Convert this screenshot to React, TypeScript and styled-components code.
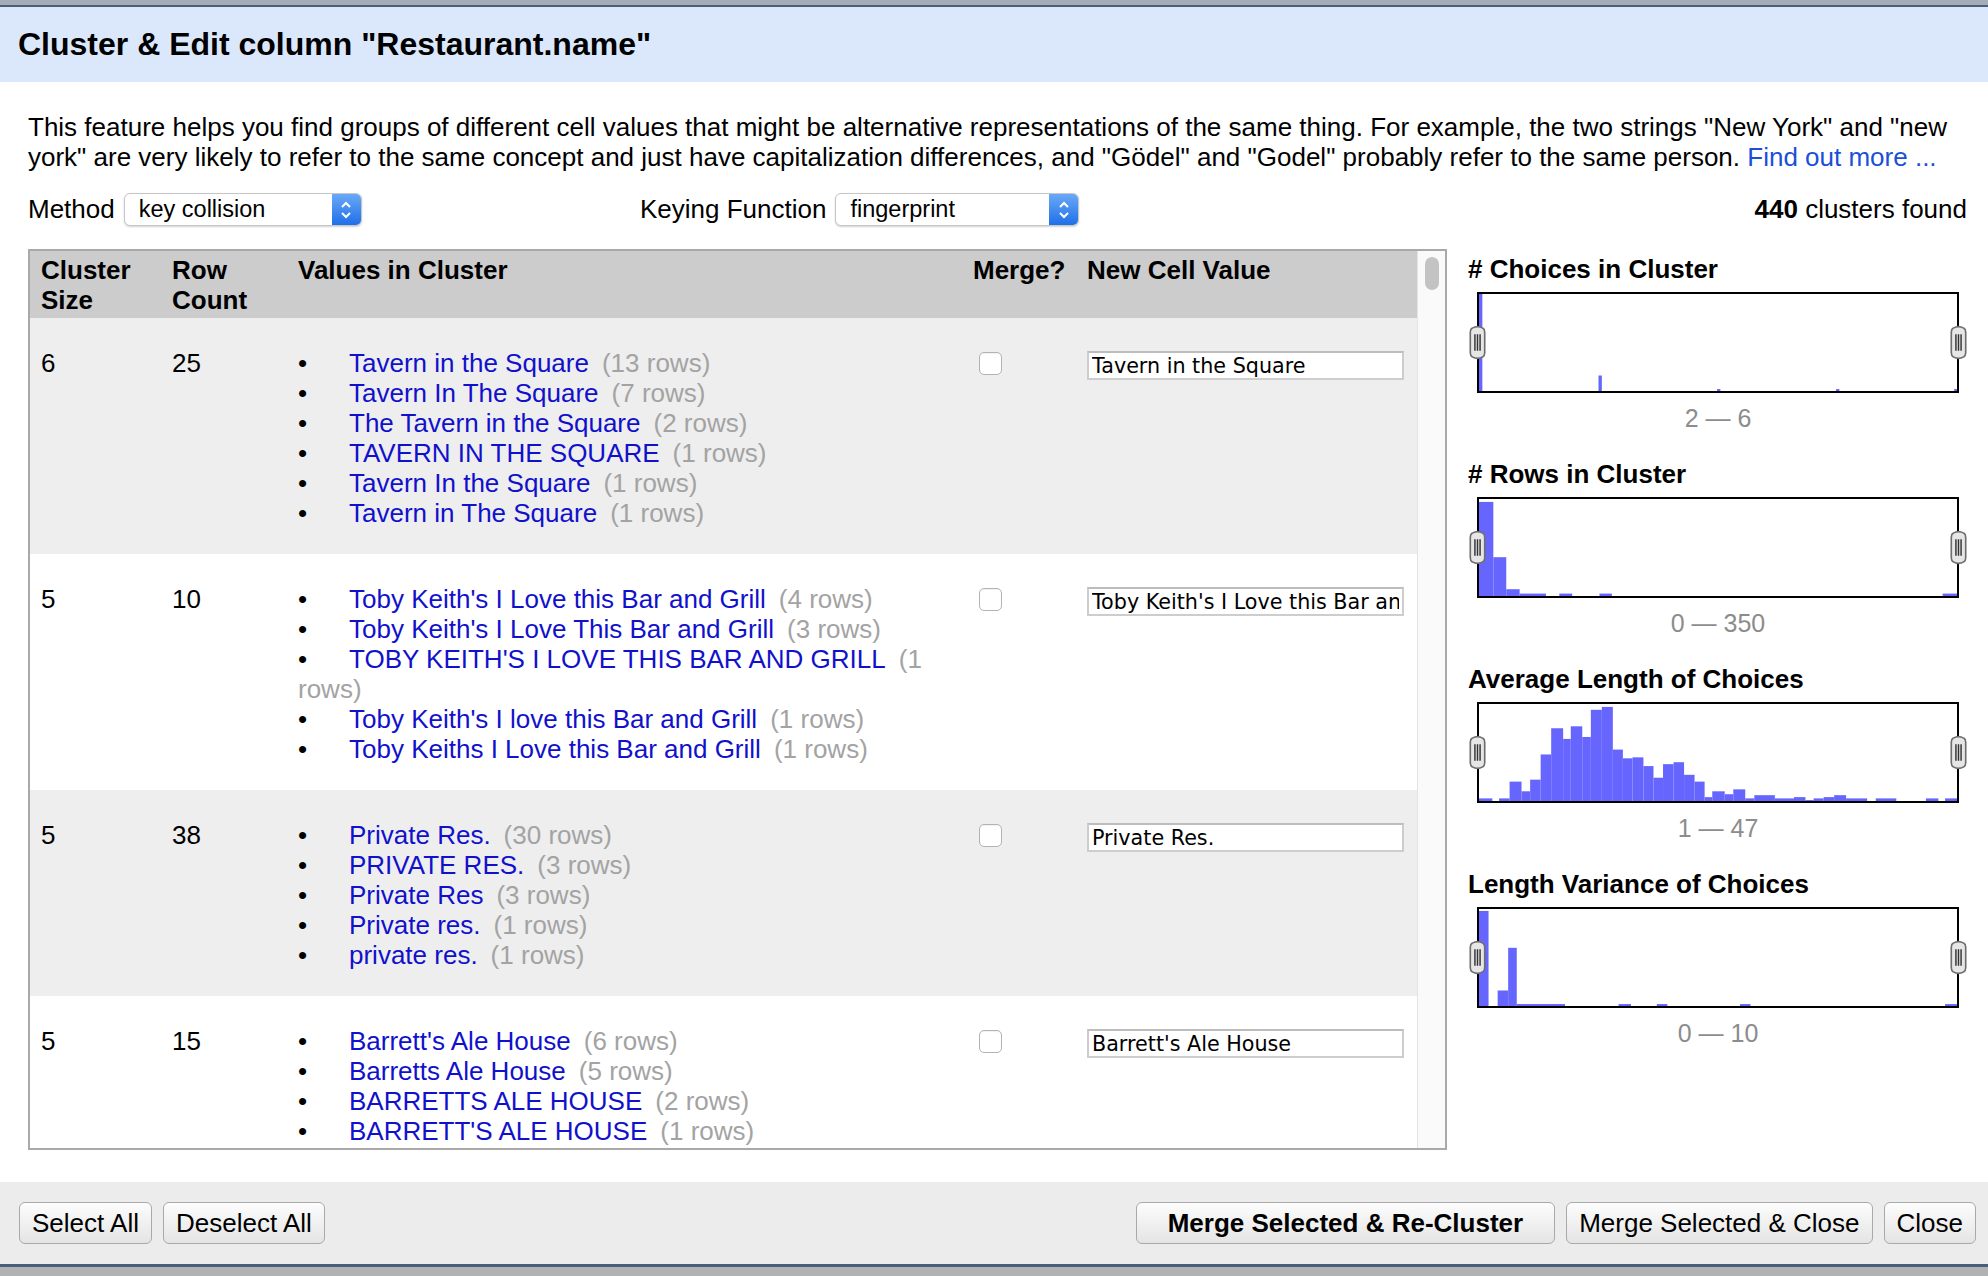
import * as React from 'react'
import styled, { createGlobalStyle } from 'styled-components'

const GlobalStyle = createGlobalStyle`
  html, body {
    margin: 0;
    padding: 0;
    background: #fff;
  }
  body {
    font-family: "Liberation Sans", Arial, Helvetica, sans-serif;
    color: #000;
    overflow: hidden;
  }
`

interface Cluster {
  size: number
  rows: number
  newValue: string
  values: [string, number][]
}

const CLUSTERS: Cluster[] = [
  {
    size: 6,
    rows: 25,
    newValue: 'Tavern in the Square',
    values: [
      ['Tavern in the Square', 13],
      ['Tavern In The Square', 7],
      ['The Tavern in the Square', 2],
      ['TAVERN IN THE SQUARE', 1],
      ['Tavern In the Square', 1],
      ['Tavern in The Square', 1],
    ],
  },
  {
    size: 5,
    rows: 10,
    newValue: "Toby Keith's I Love this Bar and Grill",
    values: [
      ["Toby Keith's I Love this Bar and Grill", 4],
      ["Toby Keith's I Love This Bar and Grill", 3],
      ["TOBY KEITH'S I LOVE THIS BAR AND GRILL", 1],
      ["Toby Keith's I love this Bar and Grill", 1],
      ['Toby Keiths I Love this Bar and Grill', 1],
    ],
  },
  {
    size: 5,
    rows: 38,
    newValue: 'Private Res.',
    values: [
      ['Private Res.', 30],
      ['PRIVATE RES.', 3],
      ['Private Res', 3],
      ['Private res.', 1],
      ['private res.', 1],
    ],
  },
  {
    size: 5,
    rows: 15,
    newValue: "Barrett's Ale House",
    values: [
      ["Barrett's Ale House", 6],
      ['Barretts Ale House', 5],
      ['BARRETTS ALE HOUSE', 2],
      ["BARRETT'S ALE HOUSE", 1],
    ],
  },
]

// bars: [start, end, height] on a 0..1000 x scale, height 0..1
type Bar = [number, number, number]

interface Facet {
  title: string
  range: string
  bars: Bar[]
}

const FACETS: Facet[] = [
  {
    title: '# Choices in Cluster',
    range: '2 — 6',
    bars: [
      [0, 7, 1],
      [250, 257, 0.16],
      [498, 505, 0.02],
      [747, 754, 0.02],
      [994, 1000, 0.02],
    ],
  },
  {
    title: '# Rows in Cluster',
    range: '0 — 350',
    bars: [
      [0, 30, 0.97],
      [30, 57, 0.4],
      [57, 85, 0.07],
      [85, 140, 0.025],
      [168, 195, 0.025],
      [252, 278, 0.025],
      [970, 1000, 0.025],
    ],
  },
  {
    title: 'Average Length of Choices',
    range: '1 — 47',
    bars: [
      [0, 28, 0.027],
      [42, 64, 0.027],
      [64, 89, 0.2],
      [89, 107, 0.1],
      [107, 129, 0.22],
      [129, 151, 0.48],
      [151, 176, 0.75],
      [176, 192, 0.64],
      [192, 216, 0.77],
      [216, 234, 0.66],
      [234, 257, 0.94],
      [257, 280, 0.97],
      [280, 301, 0.53],
      [301, 321, 0.44],
      [321, 344, 0.45],
      [344, 365, 0.36],
      [365, 385, 0.24],
      [385, 407, 0.38],
      [407, 429, 0.4],
      [429, 451, 0.27],
      [451, 472, 0.2],
      [472, 488, 0.04],
      [488, 514, 0.1],
      [514, 532, 0.07],
      [532, 557, 0.12],
      [557, 576, 0.027],
      [576, 619, 0.06],
      [619, 659, 0.027],
      [659, 683, 0.04],
      [683, 700, 0.01],
      [700, 721, 0.027],
      [721, 743, 0.04],
      [743, 768, 0.06],
      [768, 812, 0.027],
      [830, 873, 0.027],
      [935, 961, 0.027],
      [975, 1000, 0.027],
    ],
  },
  {
    title: 'Length Variance of Choices',
    range: '0 — 10',
    bars: [
      [0, 20, 0.98],
      [39, 61, 0.16],
      [61, 79, 0.6],
      [79, 180, 0.02],
      [292, 318, 0.02],
      [372, 394, 0.02],
      [546, 568, 0.02],
      [975, 1000, 0.02],
    ],
  },
]

const Page = styled.div`
  width: 1988px;
  height: 1276px;
  display: flex;
  flex-direction: column;
  background: #fff;
`

const BehindStrip = styled.div`
  height: 5px;
  background: #a4acb8;
  border-bottom: 2px solid #485f7c;
  flex-shrink: 0;
`

const TitleBar = styled.div`
  height: 75px;
  flex-shrink: 0;
  background: #dbe8fb;
  display: flex;
  align-items: center;
  padding-left: 18px;
  font-size: 32px;
  font-weight: bold;
`

const Body = styled.div`
  flex: 1;
  padding: 30px 21px 0 28px;
  display: flex;
  flex-direction: column;
  min-height: 0;
`

const Intro = styled.p`
  margin: 0;
  font-size: 26px;
  line-height: 30px;
`

const Link = styled.a`
  color: #1a4fd8;
  text-decoration: none;
`

const Controls = styled.div`
  margin-top: 21px;
  height: 33px;
  display: grid;
  grid-template-columns: 612px 1fr auto;
  align-items: center;
  font-size: 26px;
`

const Field = styled.div`
  display: flex;
  align-items: center;
  gap: 9px;
`

const SelectBox = styled.div<{ $width: number }>`
  width: ${p => p.$width}px;
  height: 33px;
  box-sizing: border-box;
  border: 1px solid #c6c6c6;
  border-radius: 6px;
  box-shadow: 0 1px 2px rgba(0, 0, 0, 0.18);
  display: flex;
  align-items: center;
  background: #fff;
  overflow: hidden;
`

const SelectText = styled.span`
  flex: 1;
  padding-left: 14px;
  font-size: 23.5px;
`

const Stepper = styled.span`
  width: 29px;
  height: 100%;
  background: linear-gradient(#6aa9f8, #1f6fe8);
  display: flex;
  align-items: center;
  justify-content: center;
`

const Found = styled.div`
  text-align: right;
`

const Main = styled.div`
  margin-top: 23px;
  display: flex;
  gap: 21px;
  height: 901px;
`

const Panel = styled.div`
  width: 1419px;
  box-sizing: border-box;
  border: 2px solid #a9a9a9;
  display: flex;
  overflow: hidden;
`

const TableArea = styled.div`
  flex: 1;
  overflow: hidden;
`

const Scrollbar = styled.div`
  width: 27px;
  background: #fafafa;
  border-left: 1px solid #e4e4e4;
  flex-shrink: 0;
`

const Thumb = styled.div`
  margin: 6px 6px 0 7px;
  height: 33px;
  border-radius: 7px;
  background: #c3c3c3;
`

const Grid = styled.div`
  display: grid;
  grid-template-columns: 131px 126px 675px 114px 1fr;
  padding-left: 11px;
  font-size: 26px;
  line-height: 30px;
`

const HeadRow = styled(Grid)`
  background: #cccccc;
  height: 67px;
  box-sizing: border-box;
  padding-top: 4px;
  font-weight: bold;
`

const Row = styled(Grid)<{ $odd: boolean }>`
  background: ${p => (p.$odd ? '#fff' : '#eeeeee')};
  padding-top: 30px;
  padding-bottom: 26px;
`

const ValuesCell = styled.ul`
  list-style: none;
  margin: 0;
  padding: 0 25px 0 0;
`

const Bullet = styled.span`
  display: inline-block;
  width: 51px;
`

const ValueLink = styled.a`
  color: #1111cc;
  text-decoration: none;
`

const Count = styled.span`
  color: #a3a3a3;
  margin-left: 13px;
`

const Check = styled.span`
  display: block;
  width: 23px;
  height: 23px;
  margin: 4px 0 0 6px;
  box-sizing: border-box;
  border: 1px solid #b3b3b3;
  border-radius: 5px;
  background: #fff;
  box-shadow: inset 0 1px 1px rgba(0, 0, 0, 0.06);
`

const NewValue = styled.input`
  width: 317px;
  height: 29px;
  box-sizing: border-box;
  margin: 3px 0 0 0;
  border: 2px solid #cdcdcd;
  border-top-color: #bdbdbd;
  padding: 0 3px;
  font-family: "DejaVu Sans", Verdana, sans-serif;
  font-size: 20.7px;
  color: #000;
  background: #fff;
  outline: none;
`

const Facets = styled.div`
  flex: 1;
  padding-top: 5px;
`

const FacetBlock = styled.div`
  margin-bottom: 26px;
`

const FacetTitle = styled.div`
  font-size: 26px;
  font-weight: bold;
  line-height: 30px;
`

const Chart = styled.div`
  position: relative;
  margin: 8px 0 0 9px;
  width: 482px;
  height: 101px;
  box-sizing: border-box;
  border: 2px solid #000;
  background: #fff;
  svg.bars {
    display: block;
    width: 100%;
    height: 100%;
  }
`

const Handle = styled.svg<{ $side: 'left' | 'right' }>`
  position: absolute;
  top: 31px;
  ${p => (p.$side === 'left' ? 'left: -11px;' : 'right: -11px;')}
  width: 19px;
  height: 35px;
`

const RangeLabel = styled.div`
  margin: 10px 0 0 9px;
  width: 482px;
  text-align: center;
  color: #8c8c8c;
  font-size: 25px;
  line-height: 30px;
`

const Footer = styled.div`
  height: 82px;
  flex-shrink: 0;
  background: #ececec;
  display: flex;
  align-items: center;
  justify-content: space-between;
  padding: 0 12px 0 19px;
`

const ButtonGroup = styled.div`
  display: flex;
  gap: 11px;
`

const Button = styled.button<{ $primary?: boolean }>`
  height: 42px;
  padding: 0 ${p => (p.$primary ? 31 : 12)}px;
  border: 1px solid #a9a9a9;
  border-radius: 6px;
  background: linear-gradient(#fdfdfd, #e4e4e4);
  font-family: "Liberation Sans", Arial, sans-serif;
  font-size: 26px;
  font-weight: ${p => (p.$primary ? 'bold' : 'normal')};
  color: #000;
`

const BottomStrip = styled.div`
  height: 12px;
  flex-shrink: 0;
  border-top: 3px solid #485f7c;
  box-sizing: border-box;
  background: #b2b2b2;
`

const Chevrons = () => (
  <svg width="14" height="22" viewBox="0 0 14 22">
    <path d="M3 8 L7 4 L11 8" fill="none" stroke="#fff" strokeWidth="2" />
    <path d="M3 14 L7 18 L11 14" fill="none" stroke="#fff" strokeWidth="2" />
  </svg>
)

const Select = ({ value, width }: { value: string; width: number }) => (
  <SelectBox $width={width}>
    <SelectText>{value}</SelectText>
    <Stepper>
      <Chevrons />
    </Stepper>
  </SelectBox>
)

const SliderHandle = ({ side }: { side: 'left' | 'right' }) => (
  <Handle $side={side} viewBox="0 0 18 34">
    <path
      d="M4 3 Q9 0 14 3 Q16 4 16 7 L16 27 Q16 30 14 31 Q9 34 4 31 Q2 30 2 27 L2 7 Q2 4 4 3 Z"
      fill="#e6e6e6"
      stroke="#6e6e6e"
      strokeWidth="1.6"
    />
    <path d="M6.5 9 V25 M9 9 V25 M11.5 9 V25" stroke="#333" strokeWidth="1.4" />
  </Handle>
)

const Histogram = ({ facet }: { facet: Facet }) => (
  <FacetBlock>
    <FacetTitle>{facet.title}</FacetTitle>
    <Chart>
      <svg className="bars" viewBox="0 0 1000 100" preserveAspectRatio="none">
        {facet.bars.map(([a, b, h], i) => (
          <rect key={i} x={a} y={100 - h * 100} width={b - a} height={h * 100} fill="#6666ff" />
        ))}
      </svg>
      <SliderHandle side="left" />
      <SliderHandle side="right" />
    </Chart>
    <RangeLabel>{facet.range}</RangeLabel>
  </FacetBlock>
)

export default function App() {
  return (
    <Page>
      <GlobalStyle />
      <BehindStrip />
      <TitleBar>Cluster &amp; Edit column "Restaurant.name"</TitleBar>
      <Body>
        <Intro>
          This feature helps you find groups of different cell values that might be alternative
          representations of the same thing. For example, the two strings "New York" and "new
          york" are very likely to refer to the same concept and just have capitalization
          differences, and "Gödel" and "Godel" probably refer to the same person.{' '}
          <Link href="#">Find out more ...</Link>
        </Intro>
        <Controls>
          <Field>
            Method
            <Select value="key collision" width={238} />
          </Field>
          <Field>
            Keying Function
            <Select value="fingerprint" width={244} />
          </Field>
          <Found>
            <b>440</b> clusters found
          </Found>
        </Controls>
        <Main>
          <Panel>
            <TableArea>
              <HeadRow>
                <div>
                  Cluster
                  <br />
                  Size
                </div>
                <div>
                  Row
                  <br />
                  Count
                </div>
                <div>Values in Cluster</div>
                <div>Merge?</div>
                <div>New Cell Value</div>
              </HeadRow>
              {CLUSTERS.map((c, idx) => (
                <Row key={idx} $odd={idx % 2 === 1}>
                  <div>{c.size}</div>
                  <div>{c.rows}</div>
                  <ValuesCell>
                    {c.values.map(([name, n], i) => (
                      <li key={i}>
                        <Bullet>•</Bullet>
                        <ValueLink href="#">{name}</ValueLink>
                        <Count>({n} rows)</Count>
                      </li>
                    ))}
                  </ValuesCell>
                  <div>
                    <Check />
                  </div>
                  <div>
                    <NewValue defaultValue={c.newValue} />
                  </div>
                </Row>
              ))}
            </TableArea>
            <Scrollbar>
              <Thumb />
            </Scrollbar>
          </Panel>
          <Facets>
            {FACETS.map(f => (
              <Histogram key={f.title} facet={f} />
            ))}
          </Facets>
        </Main>
      </Body>
      <Footer>
        <ButtonGroup>
          <Button>Select All</Button>
          <Button>Deselect All</Button>
        </ButtonGroup>
        <ButtonGroup>
          <Button $primary>Merge Selected &amp; Re-Cluster</Button>
          <Button>Merge Selected &amp; Close</Button>
          <Button>Close</Button>
        </ButtonGroup>
      </Footer>
      <BottomStrip />
    </Page>
  )
}
